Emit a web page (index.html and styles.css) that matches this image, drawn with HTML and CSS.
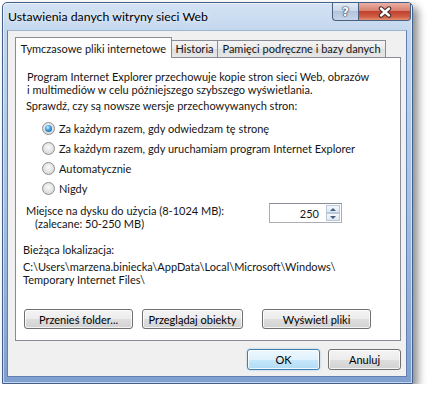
FILE: index.html
```html
<!DOCTYPE html>
<html>
<head>
<meta http-equiv="Content-Type" content="text/html; charset=UTF-8">
<title>Ustawienia danych witryny sieci Web</title>
<link rel="stylesheet" href="styles.css">
</head>
<body>
<div class="window">
<div class="titlebar">
<span class="title">Ustawienia danych witryny sieci Web</span>
<div class="caption">
<div class="cap-btn help">?</div>
<div class="cap-btn close">
<svg width="14" height="12" viewBox="0 0 14 12"><path d="M3 2.5 L11 9.5 M11 2.5 L3 9.5" stroke="#3b2a2a" stroke-width="4.4" stroke-linecap="round"/><path d="M3 2.5 L11 9.5 M11 2.5 L3 9.5" stroke="#fff" stroke-width="2.4" stroke-linecap="round"/></svg>
</div>
</div>
</div>
<div class="client">
<div class="tabs">
<div class="tab active">Tymczasowe pliki internetowe</div>
<div class="tab t2">Historia</div>
<div class="tab t3">Pamięci podręczne i bazy danych</div>
</div>
<div class="panel">
<p class="intro">Program Internet Explorer przechowuje kopie stron sieci Web, obrazów<br>i multimediów w celu późniejszego szybszego wyświetlania.</p>
<p class="check">Sprawdź, czy są nowsze wersje przechowywanych stron:</p>
<ul class="radios">
<li><span class="radio checked"></span>Za każdym razem, gdy odwiedzam tę stronę</li>
<li><span class="radio"></span>Za każdym razem, gdy uruchamiam program Internet Explorer</li>
<li><span class="radio"></span>Automatycznie</li>
<li><span class="radio"></span>Nigdy</li>
</ul>
<div class="disk">
<div class="disk-label">Miejsce na dysku do użycia (8-1024 MB):<br><span class="hint">(zalecane: 50-250 MB)</span></div>
<div class="spin">
<span class="spin-value">250</span>
<div class="spin-btns"><span class="up"></span><span class="down"></span></div>
</div>
</div>
<p class="loc-label">Bieżąca lokalizacja:</p>
<p class="loc">C:\Users\marzena.biniecka\AppData\Local\Microsoft\Windows\<br>Temporary Internet Files\</p>
<div class="panel-btns">
<div class="btn b1">Przenieś folder...</div>
<div class="btn b2">Przeglądaj obiekty</div>
<div class="btn b3">Wyświetl pliki</div>
</div>
</div>
<div class="dialog-btns">
<div class="btn ok">OK</div>
<div class="btn cancel">Anuluj</div>
</div>
</div>
</div>
</body>
</html>
```

FILE: styles.css
```css
body {
	margin: 0;
	background: #fff;
	font-family: Lato, "Liberation Sans", sans-serif;
	font-size: 11px;
	color: #151515;
}
p, ul {
	margin: 0;
	padding: 0;
}
.window {
	margin: 2px 0 0 2px;
	width: 411px;
	box-sizing: border-box;
	border: 1px solid #42608c;
	border-radius: 5px 5px 0 0;
	background: linear-gradient(to bottom, #d4e3f4 0px, #c3d7ee 28px, #a6c1e3 200px, #7f9fcf 380px);
	box-shadow: 5px 5px 8px rgba(0, 0, 0, 0.45), inset 0 0 0 1px rgba(255, 255, 255, 0.55);
}
.titlebar {
	display: flex;
	align-items: flex-start;
	height: 27px;
}
.title {
	padding-left: 5px;
	line-height: 27px;
	font-size: 12.3px;
	color: #000;
	text-shadow: 0 0 6px rgba(255, 255, 255, 0.9);
}
.caption {
	display: flex;
	margin-left: auto;
	margin-right: 1px;
}
.cap-btn {
	height: 18px;
	box-sizing: border-box;
	border: 1px solid #4d5f7d;
	border-top: none;
	display: flex;
	align-items: center;
	justify-content: center;
}
.help {
	width: 26px;
	border-right: none;
	border-radius: 0 0 0 4px;
	background: linear-gradient(to bottom, #e3ebf5 0%, #cbd8e9 45%, #b2c4dc 50%, #c6d6ea 100%);
	color: #fff;
	font-family: "DejaVu Sans", sans-serif;
	font-weight: bold;
	font-size: 12px;
	text-shadow: 0 0 1px #2c3a50, 0 0 1px #2c3a50, 0 0 2px #2c3a50;
}
.close {
	width: 53px;
	border-radius: 0 0 4px 0;
	background: linear-gradient(to bottom, #eab1a4 0%, #d7806f 45%, #c2412e 50%, #cf5d44 80%, #e38f6f 100%);
}
.client {
	margin: 0 5px 6px 4px;
	padding: 6px 5px 6px 7px;
	border: 1px solid #5f80b0;
	border-top-color: #9db4d3;
	background: #f0f0f0;
}
.tabs {
	display: flex;
	align-items: flex-end;
	height: 21px;
	margin-bottom: -1px;
	position: relative;
	z-index: 1;
}
.tab {
	box-sizing: border-box;
	border: 1px solid #898c95;
	border-bottom: none;
	text-align: center;
	white-space: nowrap;
}
.tab.active {
	width: 157px;
	height: 21px;
	line-height: 21px;
	background: #fff;
}
.t2, .t3 {
	height: 17px;
	line-height: 16px;
	margin-bottom: 1px;
	border-left: none;
	background: linear-gradient(to bottom, #f4f4f4 0%, #ebebeb 50%, #dedede 51%, #e6e6e6 100%);
}
.t2 {
	width: 46px;
}
.t3 {
	width: 168px;
}
.panel {
	border: 1px solid #898c95;
	background: #fff;
	padding: 12px 0 11px 0;
	line-height: 13px;
}
.intro {
	padding-left: 11px;
}
.check {
	margin-top: 3px;
	padding-left: 10px;
}
.radios {
	list-style: none;
	margin-top: 6px;
	padding-left: 26px;
}
.radios li {
	display: flex;
	align-items: center;
	height: 20px;
}
.radio {
	width: 13px;
	height: 13px;
	box-sizing: border-box;
	margin-right: 4px;
	border-radius: 50%;
	border: 1px solid #8c8e90;
	background: radial-gradient(circle at 50% 40%, #fafafa 0%, #e2e2e2 55%, #cdcdcd 100%);
	display: flex;
	align-items: center;
	justify-content: center;
}
.radio.checked::after {
	content: "";
	width: 7px;
	height: 7px;
	border-radius: 50%;
	background: radial-gradient(circle at 40% 35%, #c4f0ff 0%, #3b9be0 45%, #0f4f90 100%);
}
.disk {
	display: flex;
	margin-top: 5px;
	padding-left: 10px;
}
.disk-label {
	width: 243px;
	padding-top: 1px;
}
.hint {
	padding-left: 9px;
}
.spin {
	width: 73px;
	height: 20px;
	box-sizing: border-box;
	border: 1px solid #abadb3;
	border-top-color: #8a8d95;
	display: flex;
	align-items: center;
	justify-content: flex-end;
}
.spin-value {
	padding-right: 7px;
}
.spin-btns {
	display: flex;
	flex-direction: column;
	width: 14px;
	height: 16px;
	margin-right: 1px;
}
.spin-btns span {
	flex: 1;
	box-sizing: border-box;
	border: 1px solid #b9c8da;
	background: linear-gradient(to bottom, #f6f9fc, #dde6f0);
	display: flex;
	align-items: center;
	justify-content: center;
}
.spin-btns .up::after, .spin-btns .down::after {
	content: "";
	border-left: 3px solid transparent;
	border-right: 3px solid transparent;
}
.spin-btns .up::after {
	border-bottom: 3px solid #4a5e7e;
}
.spin-btns .down::after {
	border-top: 3px solid #4a5e7e;
}
.loc-label {
	margin-top: 13px;
	padding-left: 7px;
}
.loc {
	margin-top: 4px;
	padding-left: 7px;
}
.panel-btns {
	display: flex;
	margin-top: 23px;
	padding-left: 8px;
}
.btn {
	height: 20px;
	box-sizing: border-box;
	border: 1px solid #707070;
	border-radius: 3px;
	background: linear-gradient(to bottom, #f4f4f4 0%, #ececec 50%, #dedede 51%, #d2d2d2 100%);
	box-shadow: inset 0 0 0 1px rgba(255, 255, 255, 0.75);
	display: flex;
	align-items: center;
	justify-content: center;
	color: #000;
}
.b1 {
	width: 109px;
}
.b2 {
	width: 101px;
	margin-left: 9px;
}
.b3 {
	width: 109px;
	margin-left: 19px;
}
.dialog-btns {
	display: flex;
	justify-content: flex-end;
	gap: 8px;
	margin-top: 8px;
	height: 21px;
}
.dialog-btns .btn {
	width: 73px;
	height: 21px;
}
.ok {
	border-color: #3c7fb1;
	background: linear-gradient(to bottom, #eef8fe 0%, #dff2fd 50%, #c6e8fc 51%, #b2dcf5 100%);
	box-shadow: inset 0 0 0 1px rgba(255, 255, 255, 0.8), 0 0 2px rgba(80, 170, 230, 0.6);
}
```
